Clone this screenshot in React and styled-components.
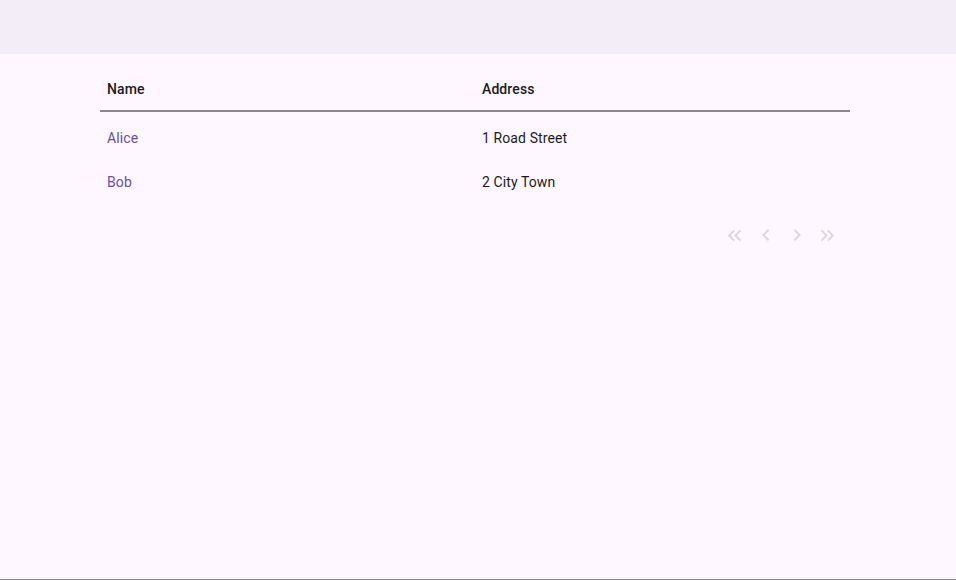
import React from 'react';
import styled, { createGlobalStyle } from 'styled-components';
import {
  MdKeyboardDoubleArrowLeft,
  MdKeyboardDoubleArrowRight,
  MdChevronLeft,
  MdChevronRight,
} from 'react-icons/md';

const GlobalStyle = createGlobalStyle`
  html, body {
    margin: 0;
    padding: 0;
    background: #fef7ff;
  }
  * {
    box-sizing: border-box;
  }
  body {
    font-family: Roboto, "Noto Sans", sans-serif;
    color: #1d1b20;
  }
`;

const Page = styled.div`
  min-height: 100vh;
  display: flex;
  flex-direction: column;
  border-bottom: 1px solid #8a868c;
`;

const TopBar = styled.header`
  height: 54px;
  background: #f3edf7;
`;

const Content = styled.main`
  width: 750px;
  margin-left: 100px;
  padding-top: 13px;
`;

const Table = styled.table`
  width: 100%;
  border-collapse: collapse;
  table-layout: fixed;
  font-size: 14px;
`;

const HeadCell = styled.th`
  height: 44px;
  padding: 0 7px;
  text-align: left;
  font-weight: 500;
  letter-spacing: 0.1px;
  color: #1d1b20;
  border-bottom: 2px solid #8a868c;
`;

const Body = styled.tbody`
  &::before {
    content: '';
    display: block;
    height: 4px;
  }
`;

const Cell = styled.td`
  height: 44px;
  padding: 0 7px;
  font-weight: 400;
  letter-spacing: 0.1px;
  color: ${({ $link }) => ($link ? '#6750a4' : '#1d1b20')};
`;

const Pager = styled.nav`
  display: flex;
  justify-content: flex-end;
  padding: 19px 7px 0 0;
`;

const PageButton = styled.button`
  width: 31px;
  height: 24px;
  padding: 0;
  border: none;
  background: transparent;
  display: flex;
  align-items: center;
  justify-content: center;
  color: #dcd6de;
  cursor: default;
`;

const rows = [
  { name: 'Alice', address: '1 Road Street' },
  { name: 'Bob', address: '2 City Town' },
];

const App = () => {
  return (
    <Page>
      <GlobalStyle />
      <TopBar />
      <Content>
        <Table>
          <thead>
            <tr>
              <HeadCell>Name</HeadCell>
              <HeadCell>Address</HeadCell>
            </tr>
          </thead>
          <Body>
            {rows.map((row) => (
              <tr key={row.name}>
                <Cell $link>{row.name}</Cell>
                <Cell>{row.address}</Cell>
              </tr>
            ))}
          </Body>
        </Table>
        <Pager>
          <PageButton disabled>
            <MdKeyboardDoubleArrowLeft size={23} />
          </PageButton>
          <PageButton disabled>
            <MdChevronLeft size={24} />
          </PageButton>
          <PageButton disabled>
            <MdChevronRight size={24} />
          </PageButton>
          <PageButton disabled>
            <MdKeyboardDoubleArrowRight size={23} />
          </PageButton>
        </Pager>
      </Content>
    </Page>
  );
};

export default App;
